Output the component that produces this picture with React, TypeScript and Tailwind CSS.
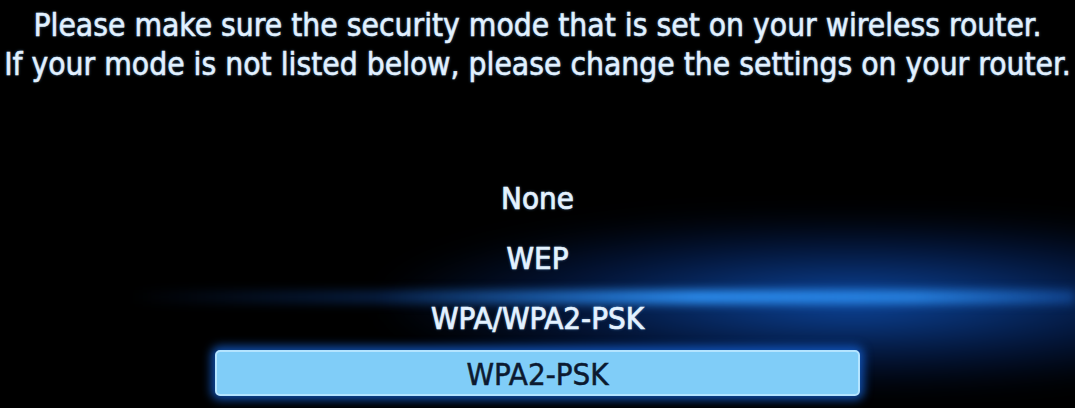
import React from 'react';

const modes = ['None', 'WEP', 'WPA/WPA2-PSK'];

export default function App() {
  return (
    <div
      className="relative w-[1075px] h-[408px] overflow-hidden bg-black"
      style={{ fontFamily: '"DejaVu Sans Condensed", "DejaVu Sans", sans-serif' }}
    >
      {/* blue light haze behind the list */}
      <div className="absolute left-[380px] top-[220px] w-[860px] h-[170px] rounded-full bg-[radial-gradient(ellipse_at_55%_48%,rgba(18,100,225,0.7),rgba(8,55,150,0.35)_45%,transparent_72%)] blur-[14px]" />
      <div className="absolute left-[0px] top-[290px] w-[1075px] h-[14px] bg-[linear-gradient(to_right,transparent_12%,rgba(20,90,200,0.3)_35%,rgba(45,145,245,0.95)_65%,rgba(45,145,245,0.8)_85%,rgba(30,110,220,0.4))] blur-[5px]" />

      <div className="relative flex flex-col items-center">
        <div className="pt-[6px] text-center text-[31.5px] leading-[39px] text-[#e2f1ff] [-webkit-text-stroke:0.5px_#e2f1ff] [text-shadow:0_0_3px_rgba(120,190,255,0.6)]">
          <p>Please make sure the security mode that is set on your wireless router.</p>
          <p>If your mode is not listed below, please change the settings on your router.</p>
        </div>

        <ul className="mt-[91px] flex flex-col items-center gap-[14px]">
          {modes.map((m) => (
            <li
              key={m}
              className="h-[46px] flex items-center text-[31px] text-[#e4f2ff] [-webkit-text-stroke:0.7px_#e4f2ff] [text-shadow:0_0_3px_rgba(120,190,255,0.6)]"
            >
              {m}
            </li>
          ))}
          <li className="mt-[-5px] w-[645px] h-[46px] flex items-center justify-center pt-[3px] rounded-[5px] border-2 border-[#b4e4ff] bg-[#80cdf8] text-[31px] text-[#0c1a30] [-webkit-text-stroke:0.5px_#0c1a30] shadow-[0_0_10px_4px_rgba(20,100,220,0.75)]">
            WPA2-PSK
          </li>
        </ul>
      </div>
    </div>
  );
}
